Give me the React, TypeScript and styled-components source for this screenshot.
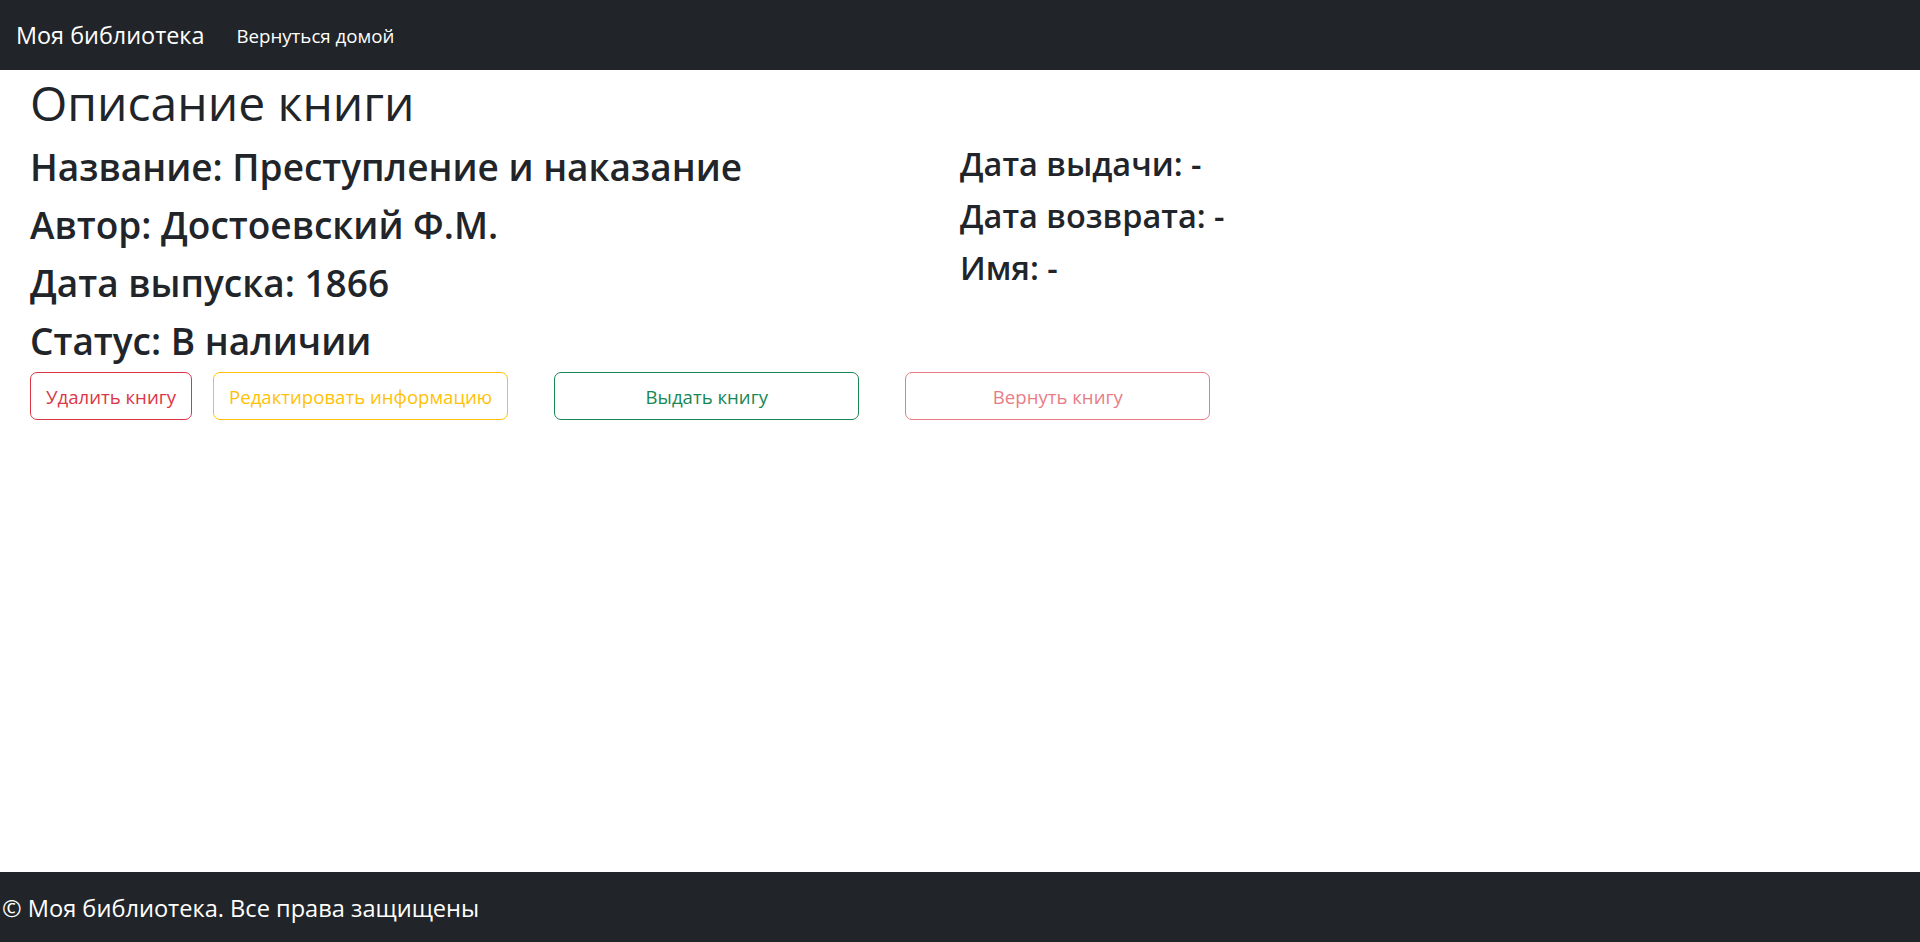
import React from "react";
import styled, { createGlobalStyle } from "styled-components";

interface Book {
  title: string;
  author: string;
  year: number;
  status: string;
  issueDate: string;
  returnDate: string;
  reader: string;
}

const book: Book = {
  title: "Преступление и наказание",
  author: "Достоевский Ф.М.",
  year: 1866,
  status: "В наличии",
  issueDate: "-",
  returnDate: "-",
  reader: "-",
};

const BookDetailPage = () => {
  return (
    <Page>
      <GlobalStyle />
      <Navbar>
        <Brand href="#">Моя библиотека</Brand>
        <NavLink href="#">Вернуться домой</NavLink>
      </Navbar>
      <Main>
        <Title>Описание книги</Title>
        <Info>
          <div>
            <Field>Название: {book.title}</Field>
            <Field>Автор: {book.author}</Field>
            <Field>Дата выпуска: {book.year}</Field>
            <Field>Статус: {book.status}</Field>
          </div>
          <div>
            <SubField>Дата выдачи: {book.issueDate}</SubField>
            <SubField>Дата возврата: {book.returnDate}</SubField>
            <SubField>Имя: {book.reader}</SubField>
          </div>
        </Info>
        <Actions>
          <Button $color="#dc3545" type="button">
            Удалить книгу
          </Button>
          <Button $color="#ffc107" type="button">
            Редактировать информацию
          </Button>
          <Button $color="#198754" $wide type="button">
            Выдать книгу
          </Button>
          <Button $color="#dc3545" $wide type="button" disabled>
            Вернуть книгу
          </Button>
        </Actions>
      </Main>
      <Footer>© Моя библиотека. Все права защищены</Footer>
    </Page>
  );
};

const GlobalStyle = createGlobalStyle`
  * {
    box-sizing: border-box;
  }

  body {
    margin: 0;
    font-family: "Open Sans", "Noto Sans", sans-serif;
    color: #212529;
    background: #fff;
  }
`;

const Page = styled.div`
  min-height: 100vh;
  display: flex;
  flex-direction: column;
`;

const Navbar = styled.nav`
  height: 70px;
  flex-shrink: 0;
  display: flex;
  align-items: center;
  padding: 0 16px;
  background: #212529;
`;

const Brand = styled.a`
  font-size: 23.4px;
  color: #fff;
  text-decoration: none;
  margin-right: 32px;
`;

const NavLink = styled.a`
  font-size: 18.7px;
  color: #fff;
  text-decoration: none;
`;

const Main = styled.main`
  flex: 1;
  padding: 3px 30px 0;
`;

const Title = styled.h1`
  margin: 0 0 10px;
  font-size: 48px;
  font-weight: 500;
  line-height: 60px;
`;

const Info = styled.div`
  display: grid;
  grid-template-columns: 1fr 1fr;
`;

const Field = styled.h2`
  margin: 0 0 10px;
  font-size: 37px;
  font-weight: 600;
  line-height: 48px;
`;

const SubField = styled.h3`
  margin: 0 0 10px;
  font-size: 32.5px;
  font-weight: 600;
  line-height: 42px;
`;

const Actions = styled.div`
  display: flex;
  align-items: center;
  gap: 21px;
  margin-top: -3px;
`;

const Button = styled.button<{ $color: string; $wide?: boolean }>`
  height: 48px;
  padding: 0 15px;
  width: ${(p) => (p.$wide ? "305px" : "auto")};
  margin-left: ${(p) => (p.$wide ? "25px" : "0")};
  font-family: inherit;
  font-size: 18.6px;
  color: ${(p) => p.$color};
  background: transparent;
  border: 1px solid ${(p) => p.$color};
  border-radius: 7px;
  cursor: pointer;

  &:disabled {
    opacity: 0.65;
    cursor: default;
  }
`;

const Footer = styled.footer`
  height: 70px;
  flex-shrink: 0;
  padding: 17px 2px 0;
  font-size: 23.6px;
  line-height: 39px;
  color: #fff;
  background: #212529;
`;

export default BookDetailPage;
